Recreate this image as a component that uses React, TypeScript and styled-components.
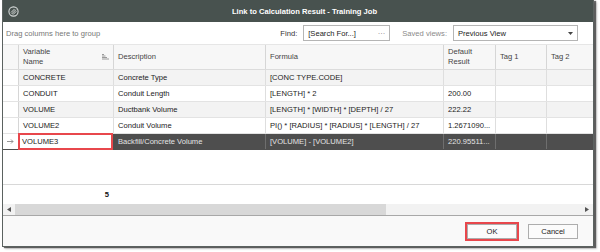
import React from "react";
import styled, { createGlobalStyle } from "styled-components";

const Global = createGlobalStyle`
  html, body { margin: 0; padding: 0; background: #ffffff; }
  body { font-family: "Liberation Sans", Arial, sans-serif; font-size: 7.6px; color: #222; }
  * { box-sizing: border-box; }
`;

const Page = styled.div`
  width: 600px;
  height: 252px;
  padding-left: 2px;
  background: #fff;
`;

const Dialog = styled.div`
  width: 592px;
  height: 247px;
  display: flex;
  flex-direction: column;
  border: 1px solid #5b6260;
  border-top: none;
  box-shadow: 2px 1px 1px rgba(0, 0, 0, 0.55), 3px 2px 2px rgba(0, 0, 0, 0.2);
  background: #fff;
  overflow: hidden;
`;

const TitleBar = styled.div`
  height: 22px;
  flex: none;
  background: #48524f;
  display: flex;
  align-items: center;
  padding-left: 5px;
`;

const Title = styled.div`
  flex: 1;
  text-align: center;
  color: #fff;
  font-weight: bold;
  font-size: 7.6px;
  margin-right: 3px;
`;

const Toolbar = styled.div`
  height: 23px;
  flex: none;
  display: flex;
  align-items: center;
  border-bottom: 1px solid #e6e6e6;
  padding: 0 0 0 3px;
`;

const GroupHint = styled.div`
  color: #777;
  flex: 1;
`;

const Label = styled.span<{ $muted?: boolean }>`
  color: ${(p) => (p.$muted ? "#8a8a8a" : "#333")};
  margin-right: 6px;
`;

const Field = styled.div<{ $w: number }>`
  width: ${(p) => p.$w}px;
  height: 16px;
  border: 1px solid #b5b5b5;
  background: #fff;
  display: flex;
  align-items: center;
  padding: 0 4px;
  justify-content: space-between;
  color: #222;
`;

const SearchField = styled(Field)`
  margin-right: 12px;
`;

const SelectField = styled(Field)`
  margin-right: 15px;
`;

const Dim = styled.span`
  color: #777;
`;

const Grid = styled.div`
  flex: 1;
  display: flex;
  flex-direction: column;
`;

const COLS = "16px 95px 152px 178px 52px 51px 1fr";

const HeaderRow = styled.div`
  height: 25px;
  flex: none;
  display: grid;
  grid-template-columns: ${COLS};
  background: #f7f7f7;
  border-bottom: 1px solid #dcdcdc;
`;

const HeaderCell = styled.div`
  border-right: 1px solid #d6d6d6;
  display: flex;
  align-items: center;
  padding: 0 4px;
  color: #444;
  line-height: 10px;
  justify-content: space-between;
  &:last-child { border-right: none; }
`;

const Row = styled.div<{ $alt?: boolean; $sel?: boolean }>`
  height: 16px;
  flex: none;
  display: grid;
  grid-template-columns: ${COLS};
  background: ${(p) => (p.$sel ? "#4e4e4e" : p.$alt ? "#f3f3f3" : "#ffffff")};
  color: ${(p) => (p.$sel ? "#e4e4e4" : "#222")};
  border-bottom: 1px solid ${(p) => (p.$sel ? "#4e4e4e" : "#e3e3e3")};
`;

const Cell = styled.div<{ $sel?: boolean }>`
  border-right: 1px solid ${(p) => (p.$sel ? "#6e6e6e" : "#dedede")};
  display: flex;
  align-items: center;
  padding: 0 4px;
  white-space: nowrap;
  overflow: hidden;
  &:last-child { border-right: none; }
`;

const Indicator = styled.div`
  background: #fff;
  border-right: 1px solid #d6d6d6;
  display: flex;
  align-items: center;
  justify-content: center;
`;

const FocusCell = styled.div`
  background: #fff;
  color: #222;
  display: flex;
  align-items: center;
  padding: 0 3px;
  outline: 2px solid #e8474c;
  outline-offset: -1px;
  margin-right: 2px;
  position: relative;
  z-index: 1;
`;

const Empty = styled.div`
  flex: 1;
`;

const Footer = styled.div`
  height: 20px;
  flex: none;
  border-top: 1px solid #d8d8d8;
  display: grid;
  grid-template-columns: ${COLS};
`;

const FooterValue = styled.div`
  grid-column: 2;
  text-align: right;
  font-weight: bold;
  padding-right: 5px;
  align-self: center;
  color: #111;
`;

const ScrollBar = styled.div`
  height: 12px;
  flex: none;
  display: flex;
  align-items: stretch;
  background: #f2f2f2;
  border-bottom: 1px solid #a8a8a8;
`;

const ScrollArrow = styled.div`
  width: 12px;
  display: flex;
  align-items: center;
  justify-content: center;
`;

const Thumb = styled.div`
  width: 371px;
  background: #d8d8d8;
`;

const Track = styled.div`
  flex: 1;
`;

const Bottom = styled.div`
  height: 30px;
  flex: none;
  background: #f9f9f9;
  display: flex;
  align-items: center;
  justify-content: flex-end;
  gap: 11px;
  padding-right: 15px;
`;

const Button = styled.div<{ $marked?: boolean }>`
  width: 50px;
  height: 15px;
  border: 1px solid #adadad;
  background: #fbfbfb;
  display: flex;
  align-items: center;
  justify-content: center;
  color: #222;
  outline: ${(p) => (p.$marked ? "2px solid #e8474c" : "none")};
`;

const Logo = () => (
  <svg width="11" height="11" viewBox="0 0 11 11">
    <circle cx="5.5" cy="5.5" r="4.6" fill="none" stroke="#d5d9d8" strokeWidth="1.1" />
    <path d="M3 6.5 L6.5 3 M3.6 8 L8 3.6 M5 8.6 L8.3 5.3" stroke="#d5d9d8" strokeWidth="1" />
  </svg>
);

const SortIcon = () => (
  <svg width="7" height="6" viewBox="0 0 7 6">
    <path d="M0 0.5 H2 M0 2 H3.5 M0 3.5 H5 M0 5 H7" stroke="#9a9a9a" strokeWidth="1" />
  </svg>
);

const Arrow = () => (
  <svg width="7" height="5" viewBox="0 0 7 5">
    <path d="M0 2.5 H6 M4 0.5 L6 2.5 L4 4.5" stroke="#8a8a8a" strokeWidth="0.9" fill="none" />
  </svg>
);

const TriLeft = () => (
  <svg width="4" height="5" viewBox="0 0 4 5"><path d="M4 0 L0 2.5 L4 5 Z" fill="#555" /></svg>
);
const TriRight = () => (
  <svg width="4" height="5" viewBox="0 0 4 5"><path d="M0 0 L4 2.5 L0 5 Z" fill="#555" /></svg>
);
const Caret = () => (
  <svg width="5" height="3" viewBox="0 0 5 3"><path d="M0 0 H5 L2.5 3 Z" fill="#444" /></svg>
);

const rows = [
  { name: "CONCRETE", desc: "Concrete Type", formula: "[CONC TYPE.CODE]", def: "" },
  { name: "CONDUIT", desc: "Conduit Length", formula: "[LENGTH] * 2", def: "200.00" },
  { name: "VOLUME", desc: "Ductbank Volume", formula: "[LENGTH] * [WIDTH] * [DEPTH] / 27", def: "222.22" },
  { name: "VOLUME2", desc: "Conduit Volume", formula: "PI() * [RADIUS] * [RADIUS] * [LENGTH] / 27", def: "1.2671090..." },
  { name: "VOLUME3", desc: "Backfill/Concrete Volume", formula: "[VOLUME] - [VOLUME2]", def: "220.95511..." },
];

export default function App() {
  return (
    <Page>
      <Global />
      <Dialog>
        <TitleBar>
          <Logo />
          <Title>Link to Calculation Result - Training Job</Title>
        </TitleBar>
        <Toolbar>
          <GroupHint>Drag columns here to group</GroupHint>
          <Label>Find:</Label>
          <SearchField $w={87}>
            <span>[Search For...]</span>
            <Dim>···</Dim>
          </SearchField>
          <Label $muted>Saved views:</Label>
          <SelectField $w={125}>
            <span>Previous View</span>
            <Caret />
          </SelectField>
        </Toolbar>
        <Grid>
          <HeaderRow>
            <HeaderCell />
            <HeaderCell>
              <span>Variable<br />Name</span>
              <SortIcon />
            </HeaderCell>
            <HeaderCell>Description</HeaderCell>
            <HeaderCell>Formula</HeaderCell>
            <HeaderCell>
              <span>Default<br />Result</span>
            </HeaderCell>
            <HeaderCell>Tag 1</HeaderCell>
            <HeaderCell>Tag 2</HeaderCell>
          </HeaderRow>
          {rows.map((r, i) => {
            const sel = i === 4;
            return (
              <Row key={r.name} $alt={i % 2 === 0} $sel={sel}>
                <Indicator>{sel && <Arrow />}</Indicator>
                {sel ? <FocusCell>{r.name}</FocusCell> : <Cell>{r.name}</Cell>}
                <Cell $sel={sel}>{r.desc}</Cell>
                <Cell $sel={sel}>{r.formula}</Cell>
                <Cell $sel={sel}>{r.def}</Cell>
                <Cell $sel={sel} />
                <Cell $sel={sel} />
              </Row>
            );
          })}
          <Empty />
          <Footer>
            <FooterValue>5</FooterValue>
          </Footer>
          <ScrollBar>
            <ScrollArrow><TriLeft /></ScrollArrow>
            <Thumb />
            <Track />
            <ScrollArrow><TriRight /></ScrollArrow>
          </ScrollBar>
        </Grid>
        <Bottom>
          <Button $marked>OK</Button>
          <Button>Cancel</Button>
        </Bottom>
      </Dialog>
    </Page>
  );
}
